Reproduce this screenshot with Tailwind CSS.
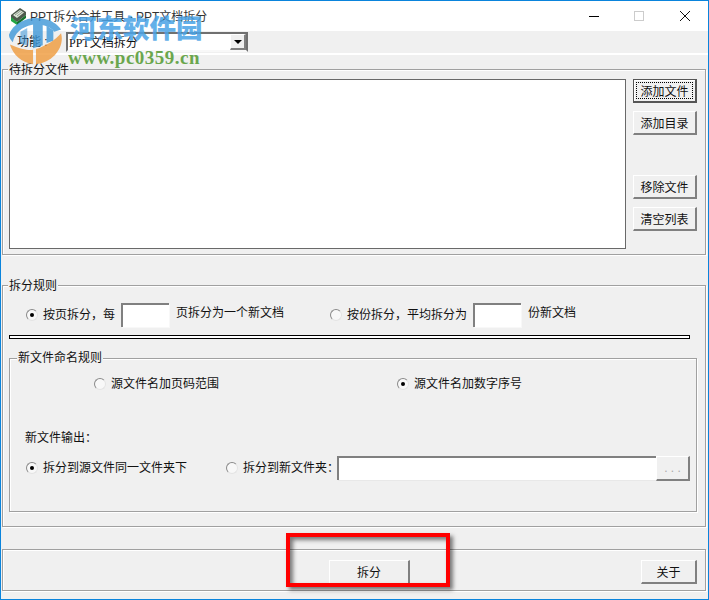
<!DOCTYPE html>
<html lang="zh-CN">

<head>
  <meta charset="UTF-8" />
  <title>PPT拆分合并工具 - PPT文档拆分</title>
  <script src="https://cdn.jsdelivr.net/npm/@tailwindcss/browser@4"></script>
</head>

<body class="bg-white">
  <div class="relative w-[709px] h-[600px] overflow-hidden text-[12px] leading-[16px] text-[#111] font-['Liberation_Sans','Noto_Sans_CJK_SC',sans-serif]">
    <div class="flex flex-col w-full h-full border border-[#0a84dc] bg-[#f0f0f0]">

      <!-- Title bar -->
      <div class="flex items-center h-[30px] bg-white pl-[9px] text-[#333]">
        <svg class="w-[17px] h-[18px] mr-[3px]" viewBox="0 0 17 18">
          <polygon points="1,8 10,1 16,5 16,8 7,15 1,11" fill="#4d5a4d" />
          <polygon points="3,8 10,3 14,5.500 7,11" fill="#dfe8da" />
          <path d="M5 8L11 3.500M7 9L13 4.500" stroke="#6b786b" stroke-width="0.7" fill="none" />
          <polygon points="1,10 7,15 7,18 1,14" fill="#22a544" />
          <polygon points="7,15 16,8 16,11 7,18" fill="#14702c" />
        </svg>
        <span class="pt-px">PPT拆分合并工具 - PPT文档拆分</span>
        <div class="flex items-center ml-auto">
          <div class="w-[10px] h-px bg-black mr-[35px]"></div>
          <div class="w-[10px] h-[10px] border border-[#ccc] mr-[36px]"></div>
          <svg class="w-[10px] h-[10px] mr-[18px]" viewBox="0 0 10 10">
            <path d="M0 0L10 10M10 0L0 10" stroke="#111" stroke-width="1" fill="none" />
          </svg>
        </div>
      </div>

      <!-- Function selector -->
      <div class="flex items-center h-[24px] border-b-2 border-white pl-[16px] shrink-0">
        <span class="w-[49px]">功能 :</span>
        <div class="flex items-center w-[182px] h-[20px] border-2 border-t-[#707070] border-l-[#707070] border-r-[#707070] border-b-[#f8f8f8] bg-white pl-[1px] font-['Liberation_Serif','Noto_Sans_CJK_SC',serif]">
          <span class="pt-px">PPT文档拆分</span>
          <div class="flex items-center justify-center ml-auto w-[16px] h-full bg-[#f0f0f0] border-r-2 border-b-2 border-[#808080] border-t border-l border-t-white border-l-white">
            <div class="w-0 h-0 border-x-[4px] border-x-transparent border-t-[4px] border-t-black"></div>
          </div>
        </div>
      </div>

      <!-- 待拆分文件 -->
      <div class="relative flex gap-[7px] h-[186px] ml-px mr-[2px] mt-[14px] pl-[6px] pt-[9px] border border-[#a0a0a0] shadow-[inset_1px_1px_0_#fff,1px_1px_0_#fff] shrink-0">
        <span class="absolute left-[5px] -top-[8px] px-px bg-[#f0f0f0]">待拆分文件</span>
        <div class="w-[617px] h-[170px] bg-white border border-[#696969]"></div>
        <div class="flex flex-col w-[64px]">
          <button class="relative h-[24px] pt-[2px] bg-[#f0f0f0] border border-[#555] border-r-2 border-b-2 shadow-[inset_1px_1px_0_#fff]">
            <span class="absolute inset-[2px] border border-dotted border-black"></span>添加文件
          </button>
          <button class="h-[24px] pt-[2px] mt-[8px] bg-[#f0f0f0] border-t border-l border-white border-r-2 border-b-2 border-r-[#808080] border-b-[#808080]">添加目录</button>
          <button class="h-[24px] pt-[2px] mt-[40px] bg-[#f0f0f0] border-t border-l border-white border-r-2 border-b-2 border-r-[#808080] border-b-[#808080]">移除文件</button>
          <button class="h-[24px] pt-[2px] mt-[8px] bg-[#f0f0f0] border-t border-l border-white border-r-2 border-b-2 border-r-[#808080] border-b-[#808080]">清空列表</button>
        </div>
      </div>

      <!-- 拆分规则 -->
      <div class="relative h-[242px] ml-px mr-[2px] mt-[30px] pl-[6px] pt-[17px] border border-[#a0a0a0] shadow-[inset_1px_1px_0_#fff,1px_1px_0_#fff] shrink-0">
        <span class="absolute left-[5px] -top-[8px] px-px bg-[#f0f0f0]">拆分规则</span>

        <div class="flex items-center h-[24px] pl-[17px]">
          <div class="flex items-center justify-center w-[12px] h-[12px] rounded-full bg-[#f8f8f8] border border-t-[#8a8a8a] border-l-[#8a8a8a] border-r-[#e4e4e4] border-b-[#e4e4e4]">
            <div class="w-[4px] h-[4px] rounded-full bg-black"></div>
          </div>
          <span class="w-[78px] ml-[5px]">按页拆分&#xFF0C;每</span>
          <div class="w-[48px] h-[24px] bg-white border-t-2 border-l-2 border-[#808080] shadow-[1px_1px_0_#f8f8f8]"></div>
          <span class="w-[154px] ml-[7px] mb-[5px]">页拆分为一个新文档</span>
          <div class="w-[12px] h-[12px] rounded-full bg-[#f8f8f8] border border-t-[#8a8a8a] border-l-[#8a8a8a] border-r-[#e4e4e4] border-b-[#e4e4e4]"></div>
          <span class="w-[126px] ml-[5px]">按份拆分&#xFF0C;平均拆分为</span>
          <div class="w-[48px] h-[24px] bg-white border-t-2 border-l-2 border-[#808080] shadow-[1px_1px_0_#f8f8f8]"></div>
          <span class="ml-[7px] mb-[5px]">份新文档</span>
        </div>

        <div class="w-[681px] h-[4px] mt-[8px] bg-white border border-black"></div>

        <!-- 新文件命名规则 -->
        <div class="relative w-[688px] h-[154px] mt-[19px] border border-[#a0a0a0] shadow-[inset_1px_1px_0_#fff,1px_1px_0_#fff]">
          <span class="absolute left-[7px] -top-[9px] px-px bg-[#f0f0f0]">新文件命名规则</span>

          <div class="flex items-center pl-[84px] pt-[17px]">
            <div class="w-[12px] h-[12px] rounded-full bg-[#f8f8f8] border border-t-[#8a8a8a] border-l-[#8a8a8a] border-r-[#e4e4e4] border-b-[#e4e4e4]"></div>
            <span class="w-[286px] ml-[5px]">源文件名加页码范围</span>
            <div class="flex items-center justify-center w-[12px] h-[12px] rounded-full bg-[#f8f8f8] border border-t-[#8a8a8a] border-l-[#8a8a8a] border-r-[#e4e4e4] border-b-[#e4e4e4]">
              <div class="w-[4px] h-[4px] rounded-full bg-black"></div>
            </div>
            <span class="ml-[5px]">源文件名加数字序号</span>
          </div>

          <p class="pl-[15px] mt-[38px]">新文件输出&#xFF1A;</p>

          <div class="flex items-center h-[24px] pl-[16px] mt-[10px]">
            <div class="flex items-center justify-center w-[12px] h-[12px] rounded-full bg-[#f8f8f8] border border-t-[#8a8a8a] border-l-[#8a8a8a] border-r-[#e4e4e4] border-b-[#e4e4e4]">
              <div class="w-[4px] h-[4px] rounded-full bg-black"></div>
            </div>
            <span class="w-[183px] ml-[5px]">拆分到源文件同一文件夹下</span>
            <div class="w-[12px] h-[12px] rounded-full bg-[#f8f8f8] border border-t-[#8a8a8a] border-l-[#8a8a8a] border-r-[#e4e4e4] border-b-[#e4e4e4]"></div>
            <span class="w-[96px] ml-[5px] -mr-[2px] whitespace-nowrap">拆分到新文件夹&#xFF1A;</span>
            <div class="w-[319px] h-[24px] bg-white border-t-2 border-l-2 border-[#808080] shadow-[1px_1px_0_#e8e8e8]"></div>
            <button class="w-[34px] h-[25px] bg-[#f0f0f0] text-[#aaa] border-t border-l border-white border-r-2 border-b-2 border-r-[#808080] border-b-[#808080]">. . .</button>
          </div>
        </div>
      </div>

      <!-- Bottom bar -->
      <div class="flex items-center h-[42px] ml-px mr-[2px] mt-[22px] pt-[9px] pl-[326px] pb-[5px] border border-[#a0a0a0] shadow-[inset_1px_1px_0_#fff,1px_1px_0_#fff] shrink-0">
        <button class="w-[81px] h-[25px] pt-[2px] bg-[#f0f0f0] border-t border-l border-white border-r-2 border-b-2 border-r-[#808080] border-b-[#808080]">拆分</button>
        <button class="w-[56px] h-[24px] pt-[2px] ml-[231px] bg-[#f0f0f0] border-t border-l border-white border-r-2 border-b-2 border-r-[#808080] border-b-[#808080]">关于</button>
      </div>
    </div>

    <!-- Red annotation box -->
    <div class="absolute left-[286px] top-[533px] w-[164px] h-[54px] border-4 border-[#ff0000] shadow-[3px_3px_4px_rgba(0,0,0,0.5),inset_3px_3px_4px_rgba(0,0,0,0.5)]"></div>

    <!-- Watermark -->
    <svg class="absolute left-[7px] top-[15px] w-[56px] h-[50px] opacity-80" viewBox="0 0 58 66" preserveAspectRatio="none">
      <path d="M2 26C7 9 24 1 38 5C46 7 52 12 56 19L49 22C44 14 34 11 26 13C15 16 8 24 6 36C4 33 2 30 2 26Z" fill="#3d97d8" />
      <path d="M27 8L37 6L37 40L27 44Z" fill="#3d97d8" />
      <path d="M41 14L48 20L48 34L41 37Z" fill="#3d97d8" />
      <path d="M14 22L21 17L21 40L14 38Z" fill="#3d97d8" opacity="0.7" />
      <path d="M3 39C14 45 22 47 27 46L27 65C15 63 6 52 3 39Z" fill="#ef9a3c" />
      <path d="M30 45C40 41 50 33 56 24C60 42 48 63 30 65Z" fill="#ef9a3c" />
    </svg>
    <span class="absolute left-[70px] top-[7px] text-[26.500px] leading-[40px] font-black text-[#4aa3e6] opacity-85 whitespace-nowrap font-['Noto_Sans_CJK_SC',sans-serif]">河东软件园</span>
    <span class="absolute left-[68px] top-[48px] text-[19px] leading-[20px] font-bold tracking-[0.5px] text-[#5c9e3c] opacity-90 whitespace-nowrap font-['Liberation_Serif',serif]">www.pc0359.cn</span>
  </div>
</body>

</html>
